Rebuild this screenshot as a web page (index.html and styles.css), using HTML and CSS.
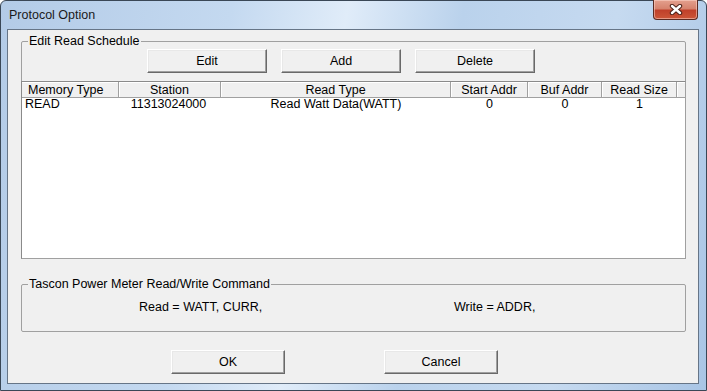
FILE: index.html
```html
<!DOCTYPE html>
<html lang="en">
<head>
<meta charset="UTF-8">
<title>Protocol Option</title>
<link rel="stylesheet" href="styles.css">
</head>
<body>
<div class="window">
    <div class="titlebar">
        <span class="title">Protocol Option</span>
        <button class="close" title="Close">
            <svg width="14" height="11" viewBox="0 0 14 11">
                <path d="M3 2 L11 9 M11 2 L3 9" stroke="#4b2118" stroke-width="4.4" stroke-linecap="round"/>
                <path d="M3 2 L11 9 M11 2 L3 9" stroke="#ffffff" stroke-width="2.4" stroke-linecap="round"/>
            </svg>
        </button>
    </div>
    <div class="client">
        <fieldset class="group schedule">
            <legend>Edit Read Schedule</legend>
            <div class="toolbar">
                <button class="btn">Edit</button>
                <button class="btn">Add</button>
                <button class="btn">Delete</button>
            </div>
            <div class="listview">
                <div class="lv-row lv-head">
                    <div class="left">Memory Type</div>
                    <div>Station</div>
                    <div>Read Type</div>
                    <div>Start Addr</div>
                    <div>Buf Addr</div>
                    <div>Read Size</div>
                    <div></div>
                </div>
                <div class="lv-row lv-item">
                    <div class="left">READ</div>
                    <div>11313024000</div>
                    <div>Read Watt Data(WATT)</div>
                    <div>0</div>
                    <div>0</div>
                    <div>1</div>
                    <div></div>
                </div>
            </div>
        </fieldset>
        <fieldset class="group command">
            <legend>Tascon Power Meter Read/Write Command</legend>
            <div class="commands">
                <span>Read = WATT, CURR,</span>
                <span>Write = ADDR,</span>
            </div>
        </fieldset>
        <div class="actions">
            <button class="btn wide">OK</button>
            <button class="btn wide">Cancel</button>
        </div>
    </div>
</div>
</body>
</html>
```

FILE: styles.css
```css
html, body {
    margin: 0;
    padding: 0;
}
body {
    font-family: "Liberation Sans", Arial, sans-serif;
    font-size: 12.5px;
    color: #000;
    background: #fff;
}
.window {
    width: 707px;
    height: 391px;
    box-sizing: border-box;
    border: 1px solid #3a4756;
    border-radius: 6px 6px 0 0;
    padding: 0 7px 6px 6px;
    background: linear-gradient(100deg, #b3cbe7 0%, #c4d9f0 30%, #e0ecf9 45%, #bad2ec 60%, #c6daf0 80%, #a9c5e5 100%);
}
.titlebar {
    height: 28px;
    display: flex;
    align-items: flex-start;
    justify-content: space-between;
}
.title {
    margin: 7px 0 0 2px;
    line-height: 15px;
    color: #1a1a1a;
}
.close {
    width: 45px;
    height: 20px;
    margin: -1px 1px 0 0;
    padding: 0;
    border: 1px solid #5a2a22;
    border-top: none;
    border-radius: 0 0 4px 4px;
    background: linear-gradient(#e4a08e 0%, #d6836e 45%, #c0402a 55%, #cc5638 100%);
    box-shadow: inset 0 0 0 1px rgba(255, 220, 210, 0.5);
    display: flex;
    align-items: center;
    justify-content: center;
}
.client {
    height: 355px;
    box-sizing: border-box;
    border: 1px solid #667587;
    background: #f0f0f0;
    overflow: hidden;
}
.group {
    margin: 0 12px 0 13px;
    padding: 0;
    border: 1px solid #a0a0a0;
    border-radius: 2px;
    min-width: 0;
}
.group legend {
    margin-left: 6px;
    padding: 0 1px;
    line-height: 15px;
}
.schedule {
    margin-top: 4px;
    padding-top: 0;
}
.toolbar {
    display: flex;
    gap: 14px;
    padding-left: 125px;
}
.btn {
    font: inherit;
    color: #000;
    width: 120px;
    height: 24px;
    padding: 0;
    background: #f0f0f0;
    border: 1px solid;
    border-color: #ffffff #696969 #696969 #ffffff;
    box-shadow: inset -1px -1px 0 #a0a0a0, inset 1px 1px 0 #e8e8e8;
}
.listview {
    margin: 8px -1px -1px;
    height: 178px;
    box-sizing: border-box;
    border: 1px solid #8a8a8a;
    border-right-color: #a0a0a0;
    border-bottom-color: #a0a0a0;
    background: #fff;
}
.lv-row {
    display: grid;
    grid-template-columns: 97px 102px 230px 77px 74px 75px 1fr;
}
.lv-row > div {
    text-align: center;
    white-space: nowrap;
    overflow: hidden;
}
.lv-row > .left {
    text-align: left;
    padding-left: 6px;
}
.lv-head {
    background: #f0f0f0;
    border-bottom: 1px solid #a0a0a0;
}
.lv-head > div {
    height: 15px;
    line-height: 16px;
    border-right: 1px solid #a0a0a0;
    box-shadow: inset 1px 1px 0 #ffffff;
}
.lv-head > div:first-child {
    box-shadow: inset 0 1px 0 #ffffff;
}
.lv-head > div:last-child {
    border-right: none;
}
.lv-item > div {
    line-height: 13px;
}
.lv-item > .left {
    padding-left: 3px;
}
.lv-item > div:first-child + div {
    padding-right: 3px;
}
.command {
    margin-top: 18px;
    padding: 8px 0 16px;
}
.commands {
    display: grid;
    grid-template-columns: 315px auto;
    padding-left: 117px;
    line-height: 15px;
}
.actions {
    display: flex;
    gap: 99px;
    margin-top: 18px;
    padding-left: 163px;
}
.btn.wide {
    width: 114px;
}
```
